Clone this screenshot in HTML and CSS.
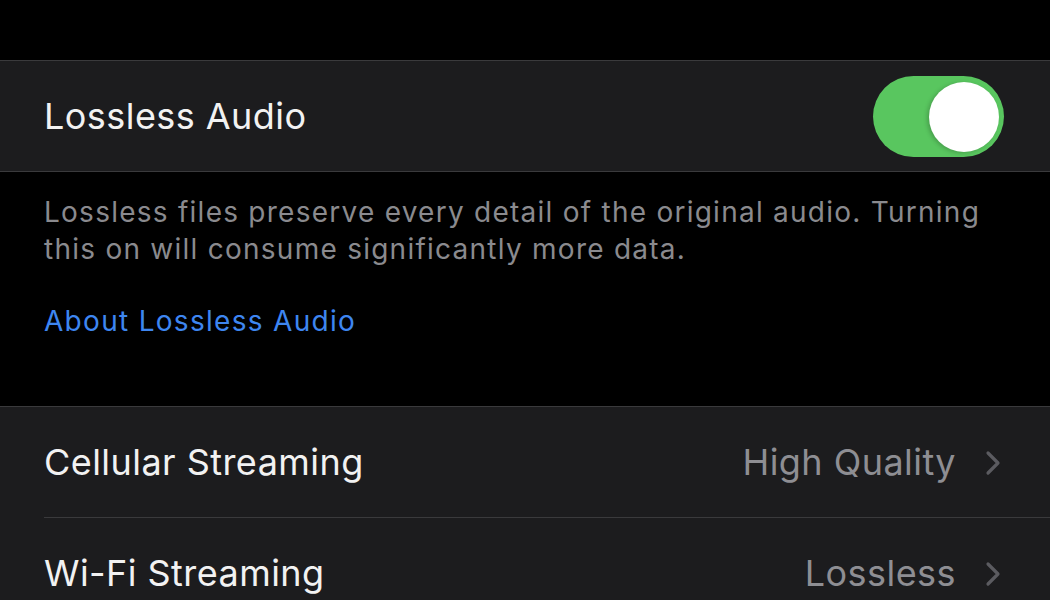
FILE: index.html
```html
<!DOCTYPE html>
<html>
<head>
<meta charset="utf-8">
<link rel="stylesheet" href="styles.css">
</head>
<body>
<div class="screen">
  <div class="top-space"></div>
  <section class="group">
    <div class="row">
      <span class="label">Lossless Audio</span>
      <span class="switch on"><span class="knob"></span></span>
    </div>
  </section>
  <div class="footer">
    <p class="footer-text">Lossless files preserve every detail of the original audio. Turning this on will consume significantly more data.</p>
    <a class="footer-link">About Lossless Audio</a>
  </div>
  <section class="group">
    <div class="row">
      <span class="label">Cellular Streaming</span>
      <span class="detail">High Quality<svg class="chev" viewBox="0 0 18 26" width="18" height="26"><path d="M4 3 L14 13 L4 23" fill="none" stroke="#5b5b60" stroke-width="3.2" stroke-linecap="round" stroke-linejoin="round"/></svg></span>
    </div>
    <div class="row sep">
      <span class="label">Wi-Fi Streaming</span>
      <span class="detail">Lossless<svg class="chev" viewBox="0 0 18 26" width="18" height="26"><path d="M4 3 L14 13 L4 23" fill="none" stroke="#5b5b60" stroke-width="3.2" stroke-linecap="round" stroke-linejoin="round"/></svg></span>
    </div>
  </section>
</div>
</body>
</html>
```
FILE: styles.css
```css
html, body {
  margin: 0;
  padding: 0;
  background: #000;
  height: 100%;
  overflow: hidden;
}
.screen {
  font-family: Inter, "Open Sans", "Liberation Sans", sans-serif;
  color: #f2f2f7;
}
.top-space {
  height: 60px;
}
.group {
  background: #1c1c1e;
  border-top: 1px solid #3a3a3c;
  border-bottom: 1px solid #3a3a3c;
  padding-left: 44px;
}
.row {
  height: 110px;
  display: flex;
  align-items: center;
  justify-content: space-between;
  padding-right: 48px;
  box-sizing: border-box;
}
.row.sep {
  border-top: 1px solid #3a3a3c;
}
.label {
  font-size: 36px;
  letter-spacing: 0.45px;
  color: #f2f2f2;
}
.detail {
  display: flex;
  align-items: center;
  gap: 28px;
  font-size: 36px;
  color: #8e8e93;
  letter-spacing: 0.45px;
}
.chev {
  display: block;
  margin-top: 2px;
}
.switch {
  width: 131px;
  height: 81px;
  border-radius: 41px;
  background: #59c65f;
  position: relative;
  margin-right: -2px;
}
.knob {
  position: absolute;
  right: 5px;
  top: 6px;
  width: 70px;
  height: 70px;
  border-radius: 50%;
  background: #fff;
  box-shadow: -2px 1px 4px rgba(0,0,0,0.2);
}
.footer {
  padding: 22px 44px 0 44px;
  height: 234px;
  box-sizing: border-box;
}
.footer-text {
  margin: 0;
  font-size: 28px;
  line-height: 37px;
  color: #8a8a8e;
  max-width: 945px;
  letter-spacing: 1.25px;
}
.footer-link {
  display: block;
  margin-top: 36px;
  font-size: 28px;
  color: #3e86f0;
  letter-spacing: 1.3px;
}
```
